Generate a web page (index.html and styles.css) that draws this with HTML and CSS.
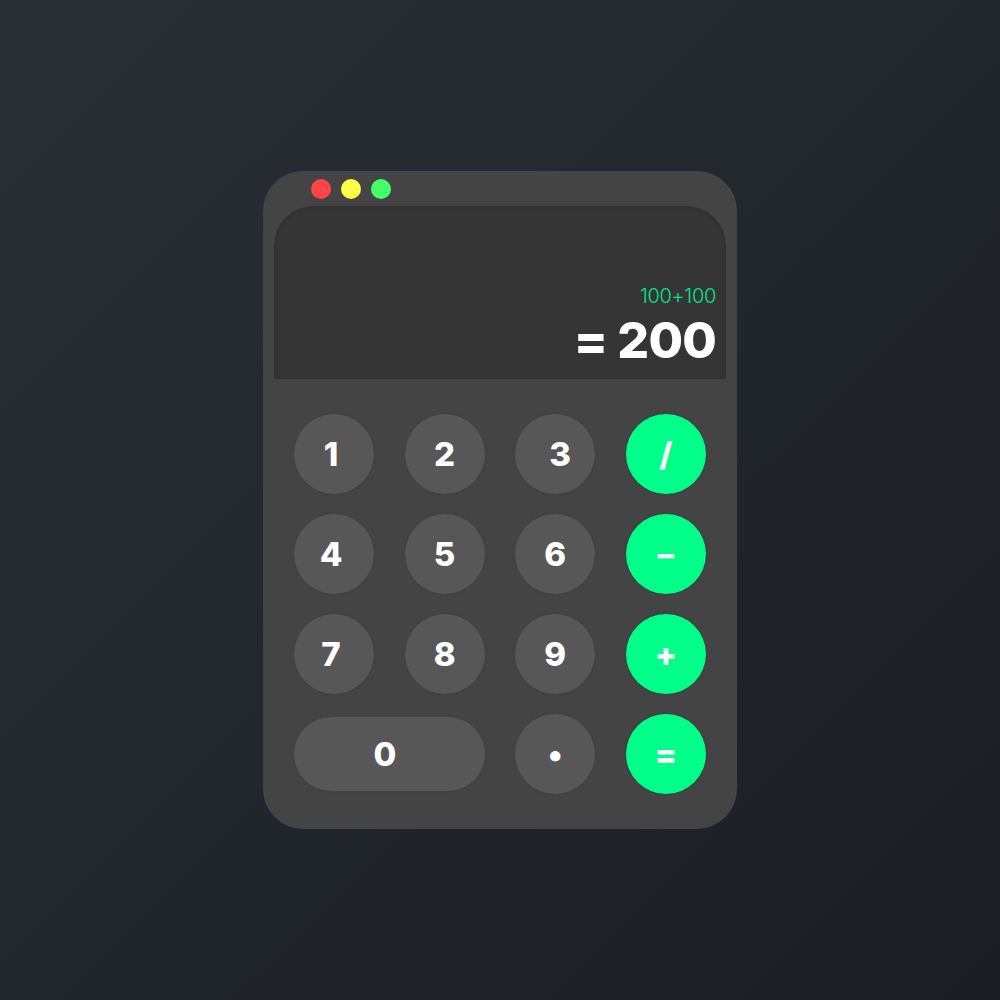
FILE: index.html
```html
<!DOCTYPE html>
<html>
<head>
<meta charset="utf-8">
<link rel="stylesheet" href="styles.css">
</head>
<body>
<div class="calc">
  <div class="titlebar">
    <span class="dot red"></span>
    <span class="dot yellow"></span>
    <span class="dot green"></span>
  </div>
  <div class="display">
    <div class="expr">100+100</div>
    <div class="result">= 200</div>
  </div>
  <div class="keys">
    <button class="key shift-l">1</button>
    <button class="key">2</button>
    <button class="key shift-r">3</button>
    <button class="key op">/</button>
    <button class="key shift-l">4</button>
    <button class="key">5</button>
    <button class="key">6</button>
    <button class="key op"><span class="wide">-</span></button>
    <button class="key shift-l">7</button>
    <button class="key">8</button>
    <button class="key">9</button>
    <button class="key op">+</button>
    <button class="key zero">0</button>
    <button class="key">•</button>
    <button class="key op">=</button>
  </div>
</div>
</body>
</html>
```
FILE: styles.css
```css
html, body {
  margin: 0;
  padding: 0;
  height: 100%;
}
body {
  background: linear-gradient(135deg, #2a2f36 0%, #22262d 50%, #1b1d23 100%);
  font-family: Inter, "Noto Sans", sans-serif;
  display: flex;
  justify-content: center;
  align-items: flex-start;
}
.calc {
  margin-top: 171px;
  width: 474px;
  height: 658px;
  background: #444444;
  border-radius: 40px;
  box-sizing: border-box;
  padding: 0 11px;
  display: flex;
  flex-direction: column;
}
.titlebar {
  height: 35px;
  display: flex;
  align-items: center;
  gap: 10px;
  padding-left: 37px;
}
.dot {
  width: 20px;
  height: 20px;
  border-radius: 50%;
}
.red { background: #ff4545; }
.yellow { background: #ffff45; }
.green { background: #45ff6a; }
.display {
  height: 173px;
  background: #353535;
  border-radius: 40px 40px 0 0;
  box-shadow: inset 0 0 4px rgba(0,0,0,0.15);
  display: flex;
  flex-direction: column;
  align-items: flex-end;
  justify-content: flex-end;
  padding: 0 10px 10px 0;
  box-sizing: border-box;
}
.expr {
  color: #00e68a;
  font-size: 20px;
  font-weight: 300;
  letter-spacing: -0.3px;
  line-height: 24px;
  margin-bottom: 1px;
}
.result {
  color: #ffffff;
  font-size: 50px;
  font-weight: 800;
  line-height: 58px;
  margin-top: 2px;
  letter-spacing: -0.8px;
}
.keys {
  display: grid;
  grid-template-columns: repeat(4, 80px);
  grid-auto-rows: 80px;
  column-gap: 30.6px;
  row-gap: 20px;
  padding: 35px 20px 0;
}
.key {
  border: none;
  border-radius: 50%;
  background: #575757;
  color: #ffffff;
  font-family: Inter, "Noto Sans", sans-serif;
  font-weight: 800;
  font-size: 33px;
  box-shadow: 0 0 3px rgba(0,0,0,0.12);
  display: flex;
  align-items: center;
  justify-content: center;
  padding: 0;
}
.shift-l {
  padding-right: 6px;
}
.shift-r {
  padding-left: 10px;
}
.op {
  background: #00ff89;
}
.wide {
  display: inline-block;
  transform: scaleX(1.5);
}
.zero {
  grid-column: span 2;
  border-radius: 37px;
  height: 74px;
  align-self: center;
  padding-right: 9px;
}
```
